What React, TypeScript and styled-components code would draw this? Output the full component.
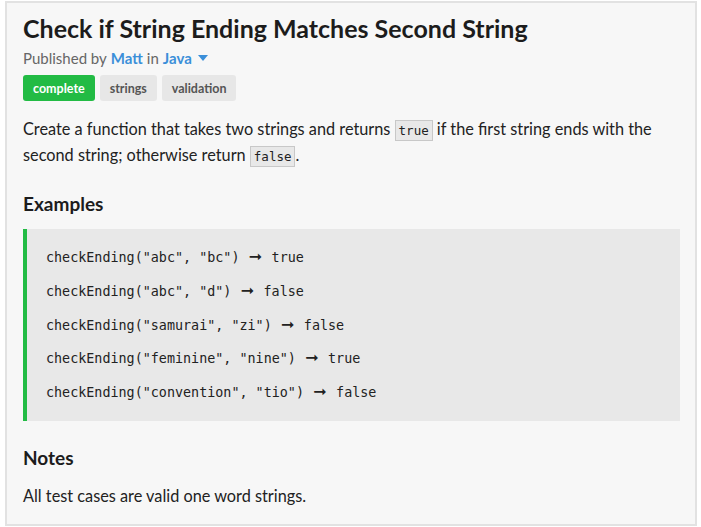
import React from "react";
import styled, { createGlobalStyle } from "styled-components";

const Global = createGlobalStyle`
  html, body { margin: 0; padding: 0; background: #ffffff; }
  body { font-family: Lato, "Open Sans", sans-serif; color: #222; }
`;

const Page = styled.div`
  padding: 1px 4px 0 5px;
  width: 701px;
  box-sizing: border-box;
`;

const Panel = styled.div`
  background: #f7f7f7;
  border: 2px solid #e2e2e2;
  height: 525px;
  box-sizing: border-box;
  padding: 9px 15px 0 16px;
`;

const Title = styled.h1`
  margin: 0;
  font-size: 25px;
  font-weight: 700;
  color: #1c1c1c;
  line-height: 32px;
`;

const Meta = styled.div`
  font-size: 15px;
  color: #666;
  margin-top: 4px;
  line-height: 20px;
  display: flex;
  align-items: center;
  gap: 4px;
`;

const Link = styled.a`
  color: #3b8fd9;
  font-weight: 700;
  text-decoration: none;
`;

const Caret = styled.span`
  display: inline-block;
  width: 0;
  height: 0;
  border-left: 5px solid transparent;
  border-right: 5px solid transparent;
  border-top: 6px solid #3b8fd9;
  margin-left: 2px;
`;

const Tags = styled.div`
  display: flex;
  gap: 5px;
  margin-top: 7px;
`;

const Tag = styled.span<{ $active?: boolean }>`
  display: inline-flex;
  align-items: center;
  height: 26px;
  padding: 0 10px;
  border-radius: 3px;
  font-size: 12.5px;
  font-weight: 700;
  background: ${(p) => (p.$active ? "#22bb44" : "#e7e7e7")};
  color: ${(p) => (p.$active ? "#ffffff" : "#555")};
`;

const Para = styled.p`
  margin: 15px 0 0 0;
  font-size: 16.3px;
  line-height: 26px;
  color: #222;
`;

const Code = styled.code`
  font-family: "DejaVu Sans Mono", monospace;
  font-size: 12.5px;
  line-height: 1;
  background: #e8e8e8;
  border: 1px solid #c8c8c8;
  padding: 2px 3px;
`;

const Heading = styled.h2<{ $gap: number }>`
  margin: ${(p) => p.$gap}px 0 0 0;
  font-size: 19px;
  font-weight: 700;
  color: #1c1c1c;
  line-height: 24px;
`;

const Block = styled.div`
  margin-top: 13px;
  background: #e8e8e8;
  border-left: 4px solid #22bb44;
  padding: 12px 0 11px 19px;
  display: flex;
  flex-direction: column;
`;

const Line = styled.div`
  font-family: "DejaVu Sans Mono", monospace;
  font-size: 13.4px;
  line-height: 33.75px;
  color: #222;
  white-space: pre;
`;

const Arrow = styled.span`
  font-family: "DejaVu Sans", sans-serif;
  font-size: 16px;
  font-weight: 700;
  display: inline-block;
  width: 14px;
  line-height: 1;
  text-align: center;
  margin: 0 1px;
`;

const NoteText = styled.p`
  margin: 14px 0 0 0;
  font-size: 16.3px;
  line-height: 24px;
`;

const examples = [
  ['checkEnding("abc", "bc")', "true"],
  ['checkEnding("abc", "d")', "false"],
  ['checkEnding("samurai", "zi")', "false"],
  ['checkEnding("feminine", "nine")', "true"],
  ['checkEnding("convention", "tio")', "false"],
];

export default function App() {
  return (
    <>
      <Global />
      <Page>
        <Panel>
          <Title>Check if String Ending Matches Second String</Title>
          <Meta>
            <span>Published by</span>
            <Link>Matt</Link>
            <span>in</span>
            <Link>Java</Link>
            <Caret />
          </Meta>
          <Tags>
            <Tag $active>complete</Tag>
            <Tag>strings</Tag>
            <Tag>validation</Tag>
          </Tags>
          <Para>
            Create a function that takes two strings and returns <Code>true</Code> if the first string ends with the
            second string; otherwise return <Code>false</Code>.
          </Para>
          <Heading $gap={24}>Examples</Heading>
          <Block>
            {examples.map(([a, b]) => (
              <Line key={a}>
                {a} <Arrow>➞</Arrow> {b}
              </Line>
            ))}
          </Block>
          <Heading $gap={25}>Notes</Heading>
          <NoteText>All test cases are valid one word strings.</NoteText>
        </Panel>
      </Page>
    </>
  );
}
